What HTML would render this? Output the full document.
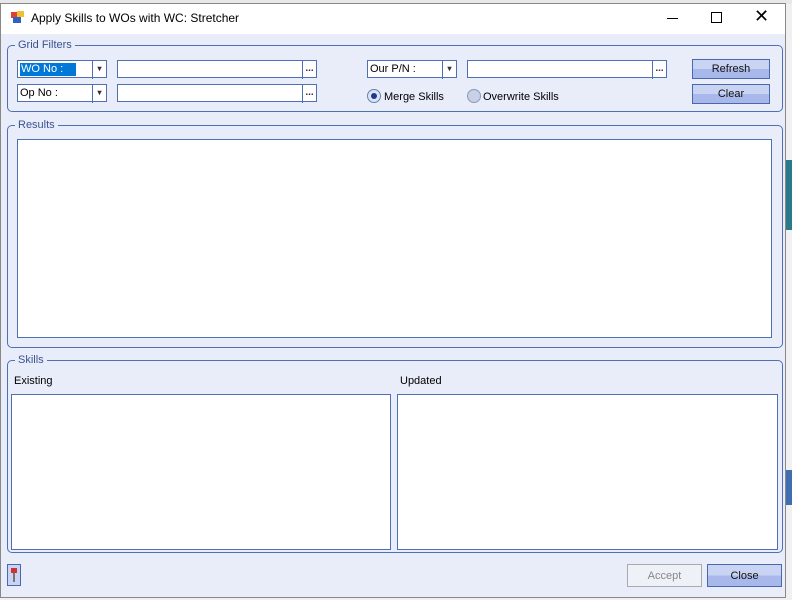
<!DOCTYPE html>
<html><head><style>
*{box-sizing:border-box;margin:0;padding:0}
body{width:792px;height:600px;overflow:hidden;background:#f0f0f0;font-family:"Liberation Sans",sans-serif;font-size:11px;position:relative}
.a{position:absolute}
.win{left:0;top:3px;width:786px;height:595px;background:#e8edf9;border:1px solid #888}
.title{left:1px;top:4px;width:784px;height:30px;background:#fff}
.grp{border:1px solid #4f6fb5;border-radius:5px}
.lg{background:#e8edf9;color:#3a5290;padding:0 3px;font-size:11px}
.box{background:#fff;border:1px solid #4f6fb5}
.btn{border:1px solid #4a68b0;background:linear-gradient(#c9d3f2 0,#c9d3f2 50%,#a9b8ea 50%,#a9b8ea 100%);text-align:center;font-size:11px;color:#111}
.dots{border-left:1px solid #4f6fb5;width:14px;height:18px;top:0;right:0;font-size:10px;text-align:center;line-height:16px;font-weight:bold;color:#333}
</style></head><body>
<div class="a" style="left:0;top:0;width:792px;height:4px;background:#e8e8e8"></div>
<div class="a" style="left:786px;top:160px;width:6px;height:70px;background:#2b7a8a"></div>
<div class="a" style="left:786px;top:470px;width:6px;height:35px;background:#3f6fae"></div>
<div class="a win"></div>
<div class="a title"></div>
<div class="a" style="left:11px;top:12px;width:6px;height:6px;background:#e04030"></div>
<div class="a" style="left:17px;top:11px;width:7px;height:6px;background:#f0c030"></div>
<div class="a" style="left:13px;top:17px;width:8px;height:6px;background:#3060c0"></div>
<div class="a" style="left:31px;top:11px;font-size:12px;color:#000">Apply Skills to WOs with WC: Stretcher</div>
<div class="a" style="left:667px;top:18px;width:11px;height:1px;background:#000"></div>
<div class="a" style="left:711px;top:12px;width:11px;height:11px;border:1px solid #000"></div>
<div class="a" style="left:754px;top:6px;font-size:18px;color:#000">✕</div>

<div class="a grp" style="left:7px;top:45px;width:776px;height:67px"></div>
<div class="a lg" style="left:15px;top:39px">Grid Filters</div>
<div class="a box" style="left:17px;top:60px;width:90px;height:18px"><span style="background:#0078d7;color:#fff;padding:0 1px;position:absolute;top:2px;left:2px;width:56px;height:13px;line-height:13px">WO No :</span><div class="a dots" style="font-size:8px">▾</div></div>
<div class="a box" style="left:17px;top:84px;width:90px;height:18px;padding:2px 2px">Op No :<div class="a dots" style="font-size:8px">▾</div></div>
<div class="a box" style="left:117px;top:60px;width:200px;height:18px"><div class="a dots">...</div></div>
<div class="a box" style="left:117px;top:84px;width:200px;height:18px"><div class="a dots">...</div></div>
<div class="a box" style="left:367px;top:60px;width:90px;height:18px;padding:2px 2px">Our P/N :<div class="a dots" style="font-size:8px">▾</div></div>
<div class="a box" style="left:467px;top:60px;width:200px;height:18px"><div class="a dots">...</div></div>
<div class="a" style="left:367px;top:89px;width:14px;height:14px;border-radius:50%;border:1px solid #6680b8;background:#dde4f4"><div class="a" style="left:3px;top:3px;width:6px;height:6px;border-radius:50%;background:#1a3a90"></div></div>
<div class="a" style="left:384px;top:91px">Merge Skills</div>
<div class="a" style="left:467px;top:89px;width:14px;height:14px;border-radius:50%;border:1px solid #8898c0;background:#c8d0e4"></div>
<div class="a" style="left:483px;top:91px">Overwrite Skills</div>
<div class="a btn" style="left:692px;top:59px;width:78px;height:20px;line-height:19px">Refresh</div>
<div class="a btn" style="left:692px;top:84px;width:78px;height:20px;line-height:19px">Clear</div>

<div class="a grp" style="left:7px;top:125px;width:776px;height:223px"></div>
<div class="a lg" style="left:15px;top:119px">Results</div>
<div class="a box" style="left:17px;top:139px;width:755px;height:199px"></div>

<div class="a grp" style="left:7px;top:360px;width:776px;height:193px"></div>
<div class="a lg" style="left:15px;top:354px">Skills</div>
<div class="a" style="left:14px;top:375px">Existing</div>
<div class="a" style="left:400px;top:375px">Updated</div>
<div class="a box" style="left:11px;top:394px;width:380px;height:156px"></div>
<div class="a box" style="left:397px;top:394px;width:381px;height:156px"></div>

<div class="a" style="left:7px;top:564px;width:14px;height:22px;border:1px solid #4a68b0;background:#c9d3f2"><div class="a" style="left:3px;top:3px;width:6px;height:5px;background:#d03030"></div><div class="a" style="left:5px;top:8px;width:2px;height:9px;background:#777"></div></div>
<div class="a" style="left:627px;top:564px;width:75px;height:23px;border:1px solid #aaa;background:#eef1f8;color:#888;text-align:center;line-height:22px">Accept</div>
<div class="a btn" style="left:707px;top:564px;width:75px;height:23px;line-height:22px">Close</div>
</body></html>
